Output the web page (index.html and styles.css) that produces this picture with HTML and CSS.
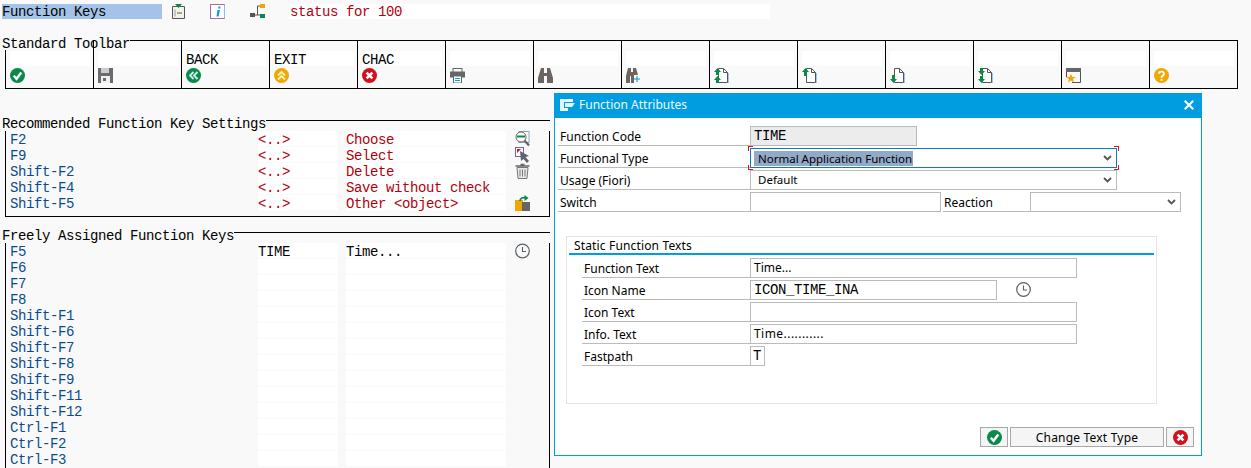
FILE: index.html
```html
<!DOCTYPE html>
<html lang="en">
<head>
<meta charset="utf-8">
<title>Function Keys</title>
<link rel="stylesheet" href="styles.css">
</head>
<body>
<svg class="defs" width="0" height="0">
  <symbol id="i-ok" viewBox="0 0 15 15"><circle cx="7.5" cy="7.5" r="7.5" fill="#0a8a4a"/><path d="M3.8 7.8l2.7 3 4.8-6.3" fill="none" stroke="#fff" stroke-width="2.4"/></symbol>
  <symbol id="i-cancel" viewBox="0 0 15 15"><circle cx="7.5" cy="7.5" r="7.5" fill="#d0121d"/><path d="M4.600 4.600l5.800 5.800M10.400 4.600l-5.800 5.800" fill="none" stroke="#fff" stroke-width="2.600"/></symbol>
  <symbol id="i-back" viewBox="0 0 15 15"><circle cx="7.5" cy="7.5" r="7.5" fill="#0a8a4a"/><path d="M7.500 4L4 7.500 7.500 11M11.500 4L8 7.500l3.500 3.500" fill="none" stroke="#cfeef5" stroke-width="1.800"/></symbol>
  <symbol id="i-exit" viewBox="0 0 15 15"><circle cx="7.5" cy="7.5" r="7.5" fill="#f0a800"/><path d="M4 7.500L7.500 4 11 7.500M4 11.500L7.500 8l3.500 3.500" fill="none" stroke="#fff0c0" stroke-width="1.800"/></symbol>
  <symbol id="i-help" viewBox="0 0 15 15"><circle cx="7.5" cy="7.5" r="7.5" fill="#f0a800"/><path d="M5 5.800c0-3 5-3 5 0 0 2-2.500 2-2.500 4" fill="none" stroke="#fff" stroke-width="1.800"/><rect x="6.500" y="10.800" width="2" height="2" fill="#fff"/></symbol>
  <symbol id="i-save" viewBox="0 0 15 15"><path d="M0 0h15v15H0z" fill="#6b6b6b"/><rect x="3" y="0" width="8" height="5" fill="#c9ccd0"/><rect x="3" y="8" width="9" height="7" fill="#eef0f2"/><rect x="5" y="10" width="3" height="3" fill="#6b6b6b"/></symbol>
  <symbol id="i-print" viewBox="0 0 15 15"><rect x="3" y=".5" width="9" height="4" fill="none" stroke="#666"/><rect x="0" y="3.500" width="15" height="6" fill="#666"/><rect x="3.500" y="8" width="8" height="7" fill="#fff" stroke="#666"/><path d="M5 10.500h5M5 12.500h5" stroke="#009de0"/></symbol>
  <symbol id="i-find" viewBox="0 0 15 15"><path d="M3 0h3v5h3V0h3l3 10v5H9V8H6v7H0V10z" fill="#6b6460"/></symbol>
  <symbol id="i-findn" viewBox="0 0 15 15"><path d="M2 0h3v4h2V0h3l2 7H8v8H5V8H4v7H0V8z" fill="#6b6460"/><path d="M11 8v6M8 11h6" stroke="#009de0" stroke-width="1.100"/></symbol>
  <symbol id="i-first" viewBox="0 0 15 15"><path d="M4.500.5h5l4 4v10h-9z" fill="#fff" stroke="#555"/><path d="M9.500.5v4h4" fill="none" stroke="#555"/><path d="M14.500 5v10" stroke="#9cc6e8"/><path d="M3.500 0L7 4H5v3H2V4H0zM3.500 8L7 12H5v3H2v-3H0z" fill="#0a8a4a"/></symbol>
  <symbol id="i-prev" viewBox="0 0 15 15"><path d="M4.500.5h5l4 4v10h-9z" fill="#fff" stroke="#555"/><path d="M9.500.5v4h4" fill="none" stroke="#555"/><path d="M14.500 5v10" stroke="#9cc6e8"/><path d="M3.500 0L7 4H5v4H2V4H0z" fill="#0a8a4a"/></symbol>
  <symbol id="i-next" viewBox="0 0 15 15"><path d="M4.500.5h5l4 4v10h-9z" fill="#fff" stroke="#555"/><path d="M9.500.5v4h4" fill="none" stroke="#555"/><path d="M14.500 5v10" stroke="#9cc6e8"/><path d="M3.500 15L7 11H5V7H2v4H0z" fill="#0a8a4a"/></symbol>
  <symbol id="i-last" viewBox="0 0 15 15"><path d="M4.500.5h5l4 4v10h-9z" fill="#fff" stroke="#555"/><path d="M9.500.5v4h4" fill="none" stroke="#555"/><path d="M14.500 5v10" stroke="#9cc6e8"/><path d="M3.500 7L7 3H5V0H2v3H0zM3.500 15L7 11H5V8H2v3H0z" fill="#0a8a4a"/></symbol>
  <symbol id="i-star" viewBox="0 0 15 15"><path d="M.5 4v-3.500h14v14H6" fill="none" stroke="#555"/><rect x="0" y="0" width="15" height="4" fill="#666"/><path d="M.5 4v5" stroke="#d0121d"/><path d="M5 6l1.500 3H10L7 11l1 3.500-3-2-3 2 1-3.500-3-2h3.500z" fill="#f0a800"/></symbol>
  <symbol id="i-clock" viewBox="0 0 15 15"><circle cx="7.500" cy="7.500" r="6.800" fill="none" stroke="#56606b" stroke-width="1.200"/><path d="M7.500 3.500v4.500h3.500" fill="none" stroke="#56606b" stroke-width="1.100"/></symbol>
  <symbol id="i-choose" viewBox="0 0 15 16"><rect x="4" y=".5" width="10" height="11" fill="#fff" stroke="#8ab"/><circle cx="6" cy="6" r="5" fill="#fff" stroke="#666"/><path d="M2 5.500h8" stroke="#0a8a4a" stroke-width="2"/><path d="M9.500 9.500l4.500 5" stroke="#666" stroke-width="2.200"/></symbol>
  <symbol id="i-select" viewBox="0 0 15 16"><rect x=".5" y=".5" width="8" height="9" fill="#fff" stroke="#8a5a90"/><path d="M2 2h4L2 6z" fill="#d0121d"/><path d="M5 4l9 5-3.500 1 3.500 4-2 2-3.500-4L6 14z" fill="#5f6670"/></symbol>
  <symbol id="i-trash" viewBox="0 0 15 16"><path d="M5.500 1.500h4M.5 3h14" stroke="#666" stroke-width="1.400"/><path d="M2 4.500h11l-1 11H3z" fill="#e9e9e9" stroke="#777"/><path d="M5 6.500v7M7.500 6.500v7M10 6.500v7" stroke="#777"/></symbol>
  <symbol id="i-other" viewBox="0 0 15 16"><rect x="0" y="5" width="8" height="11" fill="#f0a800"/><rect x="7" y="7" width="8" height="9" fill="#666"/><path d="M5 6c0-3 3-4 6-3" fill="none" stroke="#0a8a4a" stroke-width="1.800"/><path d="M9.500 0l4 3-4 3z" fill="#0a8a4a"/></symbol>
</svg>

<header class="topbar">
  <span class="title">Function Keys</span>
  <svg class="ti ti-a" viewBox="0 0 15 15"><path d="M1.500 2.500h12v12h-12z" fill="#f4f1e6" stroke="#555"/><path d="M4 0h7l-3.500 4z" fill="#0a8a4a"/><path d="M6 9h5" stroke="#555"/><path d="M4 5.500v7" stroke="#999"/></svg>
  <svg class="ti ti-b" viewBox="0 0 15 15"><rect x=".5" y=".5" width="14" height="14" fill="#fff" stroke="#a46ba6"/><path d="M14.500.5v14" stroke="#8fbbe8"/><path d="M8.300 2.500h2v2h-2zM7.500 6h2.500L8.500 12.500H6.500z" fill="#009de0"/></svg>
  <svg class="ti ti-c" viewBox="0 0 15 15"><rect x="10" y="0" width="5" height="4" fill="#f0a800"/><rect x="0" y="9" width="5" height="4" fill="#555"/><rect x="10" y="10" width="5" height="4" fill="#0a8a4a"/><path d="M5 11h5M7.500 11V2H10" fill="none" stroke="#555"/></svg>
  <span class="status">status for 100</span>
</header>

<section class="toolbar-group">
  <div class="ghead"><span>Standard Toolbar</span></div>
  <div class="toolbar">
    <div class="tb"><span class="tb-t"></span><svg class="ic"><use href="#i-ok"/></svg></div>
    <div class="tb"><span class="tb-t"></span><svg class="ic"><use href="#i-save"/></svg></div>
    <div class="tb"><span class="tb-t">BACK</span><svg class="ic"><use href="#i-back"/></svg></div>
    <div class="tb"><span class="tb-t">EXIT</span><svg class="ic"><use href="#i-exit"/></svg></div>
    <div class="tb"><span class="tb-t">CHAC</span><svg class="ic"><use href="#i-cancel"/></svg></div>
    <div class="tb"><span class="tb-t"></span><svg class="ic"><use href="#i-print"/></svg></div>
    <div class="tb"><span class="tb-t"></span><svg class="ic"><use href="#i-find"/></svg></div>
    <div class="tb"><span class="tb-t"></span><svg class="ic"><use href="#i-findn"/></svg></div>
    <div class="tb"><span class="tb-t"></span><svg class="ic"><use href="#i-first"/></svg></div>
    <div class="tb"><span class="tb-t"></span><svg class="ic"><use href="#i-prev"/></svg></div>
    <div class="tb"><span class="tb-t"></span><svg class="ic"><use href="#i-next"/></svg></div>
    <div class="tb"><span class="tb-t"></span><svg class="ic"><use href="#i-last"/></svg></div>
    <div class="tb"><span class="tb-t"></span><svg class="ic"><use href="#i-star"/></svg></div>
    <div class="tb"><span class="tb-t"></span><svg class="ic"><use href="#i-help"/></svg></div>
  </div>
</section>

<section class="keys keys-rec">
  <div class="ghead"><span>Recommended Function Key Settings</span></div>
  <div class="kbody">
    <div class="kr"><span class="k">F2</span><span class="c1 red">&lt;..&gt;</span><span class="c2 red">Choose</span><svg class="kic"><use href="#i-choose"/></svg></div>
    <div class="kr"><span class="k">F9</span><span class="c1 red">&lt;..&gt;</span><span class="c2 red">Select</span><svg class="kic"><use href="#i-select"/></svg></div>
    <div class="kr"><span class="k">Shift-F2</span><span class="c1 red">&lt;..&gt;</span><span class="c2 red">Delete</span><svg class="kic"><use href="#i-trash"/></svg></div>
    <div class="kr"><span class="k">Shift-F4</span><span class="c1 red">&lt;..&gt;</span><span class="c2 red">Save without check</span></div>
    <div class="kr"><span class="k">Shift-F5</span><span class="c1 red">&lt;..&gt;</span><span class="c2 red">Other &lt;object&gt;</span><svg class="kic"><use href="#i-other"/></svg></div>
  </div>
</section>

<section class="keys keys-free">
  <div class="ghead"><span>Freely Assigned Function Keys</span></div>
  <div class="kbody kbody-open">
    <div class="kr"><span class="k">F5</span><span class="c1">TIME</span><span class="c2">Time...</span><svg class="kic"><use href="#i-clock"/></svg></div>
    <div class="kr"><span class="k">F6</span><span class="c1"></span><span class="c2"></span></div>
    <div class="kr"><span class="k">F7</span><span class="c1"></span><span class="c2"></span></div>
    <div class="kr"><span class="k">F8</span><span class="c1"></span><span class="c2"></span></div>
    <div class="kr"><span class="k">Shift-F1</span><span class="c1"></span><span class="c2"></span></div>
    <div class="kr"><span class="k">Shift-F6</span><span class="c1"></span><span class="c2"></span></div>
    <div class="kr"><span class="k">Shift-F7</span><span class="c1"></span><span class="c2"></span></div>
    <div class="kr"><span class="k">Shift-F8</span><span class="c1"></span><span class="c2"></span></div>
    <div class="kr"><span class="k">Shift-F9</span><span class="c1"></span><span class="c2"></span></div>
    <div class="kr"><span class="k">Shift-F11</span><span class="c1"></span><span class="c2"></span></div>
    <div class="kr"><span class="k">Shift-F12</span><span class="c1"></span><span class="c2"></span></div>
    <div class="kr"><span class="k">Ctrl-F1</span><span class="c1"></span><span class="c2"></span></div>
    <div class="kr"><span class="k">Ctrl-F2</span><span class="c1"></span><span class="c2"></span></div>
    <div class="kr"><span class="k">Ctrl-F3</span><span class="c1"></span><span class="c2"></span></div>
  </div>
</section>

<aside class="dialog">
  <div class="dlg-title">
    <svg class="dlg-ic" viewBox="0 0 15 12"><path d="M0 0h13v3H4v6h4v3H0z" fill="#e8f4fb"/><path d="M5 4h10l-3 4H5z" fill="#e8f4fb"/></svg>
    <span class="dlg-name">Function Attributes</span>
    <svg class="dlg-x" viewBox="0 0 10 10"><path d="M.7.7l8.600 8.600M9.300.7L.7 9.300" stroke="#fff" stroke-width="2"/></svg>
  </div>
  <div class="form">
    <div class="fr"><label class="lb">Function Code</label><div class="fd fd-ro mono w-code">TIME</div></div>
    <div class="fr"><label class="lb">Functional Type</label>
      <div class="fd fd-focus w-sel"><span class="seltext">Normal Application Function</span><svg class="chev" viewBox="0 0 9 6"><path d="M1 1l3.500 3.500L8 1" fill="none" stroke="#555" stroke-width="1.800"/></svg></div></div>
    <div class="fr"><label class="lb">Usage (Fiori)</label>
      <div class="fd w-sel"><span class="selval">Default</span><svg class="chev" viewBox="0 0 9 6"><path d="M1 1l3.500 3.500L8 1" fill="none" stroke="#555" stroke-width="1.800"/></svg></div></div>
    <div class="fr"><label class="lb">Switch</label><div class="fd w-switch"></div>
      <label class="lb lb-react">Reaction</label>
      <div class="fd w-react"><svg class="chev" viewBox="0 0 9 6"><path d="M1 1l3.500 3.500L8 1" fill="none" stroke="#555" stroke-width="1.800"/></svg></div></div>
  </div>
  <div class="sgroup">
    <div class="sg-title">Static Function Texts</div>
    <div class="sg-rows">
      <div class="fr"><label class="lb lb-in">Function Text</label><div class="fd w-text"><span>Time...</span></div></div>
      <div class="fr"><label class="lb lb-in">Icon Name</label><div class="fd mono w-icon">ICON_TIME_INA</div><svg class="fclock"><use href="#i-clock"/></svg></div>
      <div class="fr"><label class="lb lb-in">Icon Text</label><div class="fd w-text"></div></div>
      <div class="fr"><label class="lb lb-in">Info. Text</label><div class="fd w-text"><span class="dots">Time...........</span></div></div>
      <div class="fr"><label class="lb lb-in">Fastpath</label><div class="fd mono w-fast">T</div></div>
    </div>
  </div>
  <div class="btns">
    <button class="btn btn-i"><svg class="ic"><use href="#i-ok"/></svg></button>
    <button class="btn btn-t">Change Text Type</button>
    <button class="btn btn-i"><svg class="ic"><use href="#i-cancel"/></svg></button>
  </div>
</aside>
</body>
</html>
```
FILE: styles.css
```css
html, body { margin: 0; height: 468px; overflow: hidden; }
body {
  position: relative;
  background: #f9f9f9;
  color: #000;
  font: 14px/16px "Liberation Mono", monospace;
  letter-spacing: -.4px;
}
.defs { position: absolute; }
.topbar { display: flex; align-items: center; height: 16px; padding: 3px 0 0 2px; }
.title { width: 160px; height: 15px; line-height: 17px; background: #a3c4e8; }
.ti { width: 15px; height: 15px; flex: none; }
.ti-a { margin-left: 9px; }
.ti-b { margin-left: 24px; }
.ti-c { margin-left: 25px; }
.status { margin-left: 25px; width: 480px; height: 15px; line-height: 17px; background: #fff; color: #b5000c; }

.ghead { display: flex; padding-left: 2px; height: 16px; white-space: nowrap; }
.ghead span { line-height: 19px; height: 16px; }
.ghead::after { content: ""; flex: 1; height: 0; margin-top: 5px; border-top: 1px solid #000; }

.toolbar-group { margin: 16px 13px 0 0; }
.toolbar {
  display: grid;
  grid-template-columns: 89px repeat(13, 88px);
  margin: -11px 0 0 5px;
  height: 48px;
  border-bottom: 1px solid #000;
  background: linear-gradient(#000, #000) 0 10px / 1px 38px no-repeat;
}
.tb { box-sizing: border-box; border-right: 1px solid #000; padding: 11px 0 0 4px; }
.tb:first-child { padding-left: 5px; }
.tb-t { display: block; width: 80px; height: 15px; line-height: 18px; background: #fff; }
.ic { display: block; width: 15px; height: 15px; margin-top: 2px; }

.keys { margin-right: 701px; }
.keys-rec { margin-top: 26px; }
.keys-free { margin-top: 10px; }
.kbody {
  margin: 0 0 0 5px;
  padding: 0 0 5px 0;
  border-left: 1px solid #000;
  border-right: 1px solid #000;
  border-bottom: 1px solid #000;
}
.kbody-open { border-bottom: 0; padding-bottom: 1px; }
.kr { display: flex; height: 16px; padding-left: 4px; }
.k { width: 248px; color: #0a4b8f; line-height: 18px; }
.c1 { width: 80px; height: 15px; line-height: 18px; background: #fff; }
.c2 { width: 160px; height: 15px; line-height: 18px; margin-left: 8px; background: #fff; white-space: nowrap; }
.red { color: #b5000c; }
.kic { width: 15px; height: 16px; margin-left: 9px; }

.dialog {
  position: absolute;
  left: 554px;
  top: 93px;
  width: 646px;
  height: 361px;
  background: #fff;
  border: 1px solid #009de0;
  font: 12px/22px "Noto Sans", sans-serif;
  letter-spacing: 0;
}
.dlg-title { display: flex; align-items: center; height: 24px; margin: -1px -1px 0; padding: 0 0 1px 6px; background: #009de0; color: #eef8fd; width: 642px; }
.dlg-ic { width: 15px; height: 12px; }
.dlg-name { margin-left: 4px; flex: 1; }
.dlg-x { width: 10px; height: 10px; margin-right: 8px; }

.form { padding: 8px 0 0 3px; }
.fr { display: flex; height: 22px; }
.lb { box-sizing: border-box; width: 192px; height: 20px; padding-left: 2px; border-bottom: 1px solid #bbb; }
.fd { box-sizing: border-box; display: flex; align-items: center; height: 20px; padding-left: 3px; border: 1px solid #bbb; background: #fff; }
.mono { font: 14px/22px "Liberation Mono", monospace; letter-spacing: -.4px; }
.fd-ro { background: #ececec; }
.w-code { width: 167px; }
.w-sel { width: 367px; padding-left: 7px; }
.selval { font-size: 11.5px; }
.w-switch { width: 191px; }
.lb-react { width: 87px; margin-left: 2px; padding-left: 1px; }
.w-react { width: 151px; }
.chev { width: 9px; height: 6px; margin-left: auto; margin-right: 4px; flex: none; }
.fd-focus { position: relative; border-color: #0a7cc2; padding-left: 3px; }
.fd-focus::before {
  content: "";
  position: absolute;
  inset: -3px -3px;
  background:
    linear-gradient(#e0101c, #e0101c) 0 0 / 5px 1px no-repeat,
    linear-gradient(#e0101c, #e0101c) 0 0 / 1px 5px no-repeat,
    linear-gradient(#e0101c, #e0101c) 100% 0 / 5px 1px no-repeat,
    linear-gradient(#e0101c, #e0101c) 100% 0 / 1px 5px no-repeat,
    linear-gradient(#e0101c, #e0101c) 0 100% / 5px 1px no-repeat,
    linear-gradient(#e0101c, #e0101c) 0 100% / 1px 5px no-repeat,
    linear-gradient(#e0101c, #e0101c) 100% 100% / 5px 1px no-repeat,
    linear-gradient(#e0101c, #e0101c) 100% 100% / 1px 5px no-repeat;
}
.seltext { padding: 0 1px 0 4px; font-size: 11.5px; background: #92a9c9; line-height: 15px; }
.dots { letter-spacing: .45px; }

.sgroup {
  box-sizing: border-box;
  width: 591px;
  height: 168px;
  margin: 22px 0 0 11px;
  padding: 2px;
  border: 1px solid #e5e5e5;
}
.sg-title { width: 580px; height: 14px; line-height: 14px; padding-left: 5px; border-bottom: 2px solid #009de0; letter-spacing: .15px; }
.sg-rows { padding: 3px 0 0 13px; }
.lb-in { width: 168px; }
.w-text { width: 327px; }
.w-icon { width: 247px; }
.w-fast { width: 15px; padding-left: 2px; }
.fclock { width: 15px; height: 15px; margin: 2px 0 0 19px; }

.btns { display: flex; gap: 2px; margin: 23px 0 0 425px; }
.btn {
  box-sizing: border-box;
  height: 20px;
  padding: 0;
  display: flex;
  align-items: center;
  justify-content: center;
  background: #f5f5f5;
  border: 1px solid #a8a8a8;
  font: 12px "Noto Sans", sans-serif;
  letter-spacing: .2px;
  color: #000;
}
.btn-i { width: 28px; }
.btn-i .ic { margin: 0; }
.btn-t { width: 154px; }
```
